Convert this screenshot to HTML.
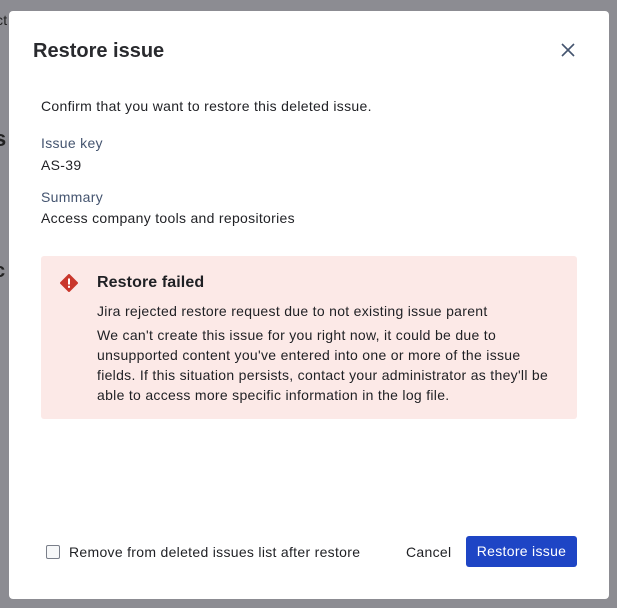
<!DOCTYPE html>
<html><head><meta charset="utf-8"><style>
*{box-sizing:border-box;margin:0;padding:0}
body{width:617px;height:608px;background:#8c8c92;font-family:"Liberation Sans",sans-serif;position:relative;overflow:hidden;color:#1f2024;letter-spacing:0.3px}
.bgt{position:absolute;color:#222;font-size:16px}
.m{position:absolute;left:9px;top:11px;width:600px;height:588px;background:#fff;border-radius:4px}
.t{position:absolute;left:24px;top:29px;font-size:20px;font-weight:bold;color:#292a2e;letter-spacing:0}
.x{position:absolute;left:552px;top:32px}
.p{position:absolute;font-size:14px;left:32px}
.lab{color:#44546f}
.err{position:absolute;left:32px;top:245px;width:536px;height:163px;background:#fce9e7;border-radius:3px}
.err .h{position:absolute;left:56px;top:18px;font-size:16px;font-weight:bold;letter-spacing:0.1px}
.err .b{position:absolute;left:56px;top:45px;font-size:14px;line-height:20px;width:462px}
.cb{position:absolute;left:37px;top:534px;width:14px;height:14px;border:1px solid #7a7f8a;border-radius:2px;background:#f7f8f9}
.btn{position:absolute;left:457px;top:525px;width:111px;height:31px;background:#1e45c5;border-radius:3px;color:#fff;font-size:14px;text-align:center;line-height:31px}
</style></head><body>
<div class="bgt" style="left:-4px;top:12px;font-size:14px">ct</div>
<div class="bgt" style="left:-6px;top:126px;font-size:22px;font-weight:bold">s</div>
<div class="bgt" style="left:-6px;top:260px;font-size:20px;font-weight:bold">c</div>
<div class="m">
<div class="t">Restore issue</div>
<svg class="x" width="14" height="14" viewBox="0 0 14 14"><path d="M1 1L13 13M13 1L1 13" stroke="#44546f" stroke-width="1.6"/></svg>
<div class="p" style="top:87px">Confirm that you want to restore this deleted issue.</div>
<div class="p lab" style="top:124px">Issue key</div>
<div class="p" style="top:146px">AS-39</div>
<div class="p lab" style="top:178px">Summary</div>
<div class="p" style="top:199px">Access company tools and repositories</div>
<div class="err">
<svg style="position:absolute;left:19px;top:18px" width="18" height="18" viewBox="0 0 18 18"><path d="M9 1L17 9L9 17L1 9Z" fill="#c9372c" stroke="#c9372c" stroke-width="2" stroke-linejoin="round"/><rect x="8" y="4.5" width="2" height="6" fill="#fff"/><rect x="8" y="11.8" width="2" height="2" fill="#fff"/></svg>
<div class="h">Restore failed</div>
<div class="b">Jira rejected restore request due to not existing issue parent<div style="margin-top:4px">We can't create this issue for you right now, it could be due to unsupported content you've entered into one or more of the issue fields. If this situation persists, contact your administrator as they'll be able to access more specific information in the log file.</div></div>
</div>
<div class="cb"></div>
<div class="p" style="left:60px;top:533px">Remove from deleted issues list after restore</div>
<div class="p" style="left:397px;top:533px">Cancel</div>
<div class="btn">Restore issue</div>
</div>
</body></html>
